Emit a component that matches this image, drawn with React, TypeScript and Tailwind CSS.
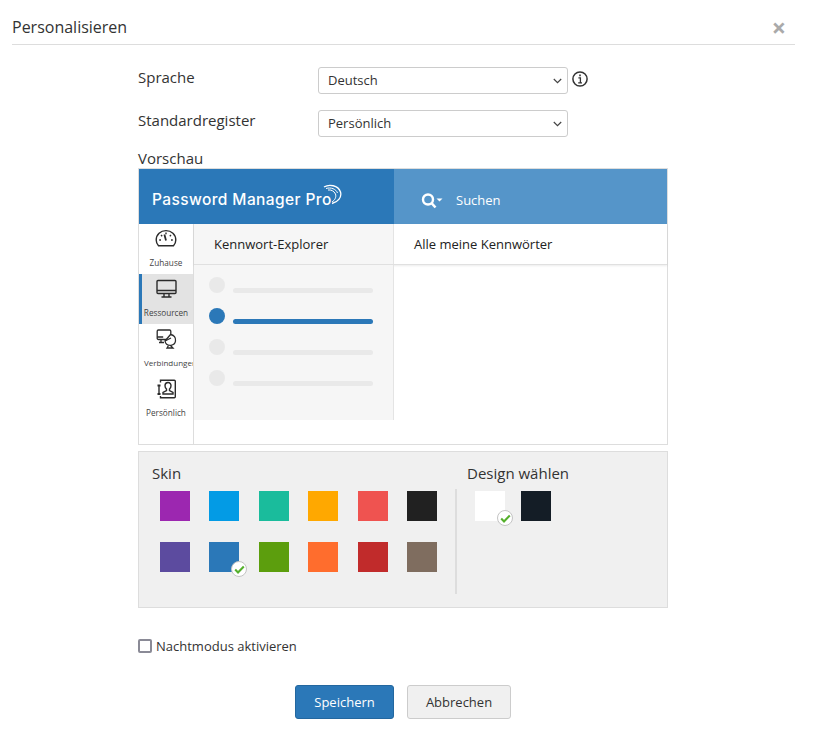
const row1 = ["#9c27b0", "#039be5", "#1abc9c", "#ffa800", "#ef5350", "#212121"];
const row2 = ["#5c4b9f", "#2b78b8", "#5c9e0d", "#ff6d2d", "#c12b2b", "#7f6d5f"];

function CheckBadge() {
  return (
    <span className="absolute right-[-8px] bottom-[-5px] flex h-[16px] w-[16px] items-center justify-center rounded-full border border-[#c4c4c4] bg-white">
      <svg width="11" height="9" viewBox="0 0 11 9" fill="none">
        <path d="M1.2 4.6 4 7.4 9.8 1.4" stroke="#55b02c" strokeWidth="2.1" />
      </svg>
    </span>
  );
}

function Swatch({ color, checked }: { color: string; checked?: boolean }) {
  return (
    <div className="relative h-[30px] w-[30px]" style={{ backgroundColor: color }}>
      {checked && <CheckBadge />}
    </div>
  );
}

function GaugeIcon() {
  return (
    <svg width="22" height="20" viewBox="0 0 22 20" fill="none" stroke="#2b2b2b" strokeWidth="1.4">
      <path d="M3.5 16.8C2 15.2 1.2 13.2 1.2 11 1.2 5.6 5.6 1.6 11 1.6S20.8 5.6 20.8 11c0 2.2-.8 4.2-2.3 5.8Z" />
      <path d="M11 11.5 9.4 5.6" strokeWidth="1.8" />
      <path d="M11 3.4v1.8M4.2 11H6M16 11h1.8M6 6l1.2 1.2M16 6l-1.2 1.2" />
    </svg>
  );
}

function MonitorIcon() {
  return (
    <svg width="21" height="20" viewBox="0 0 21 20" fill="none" stroke="#2b2b2b" strokeWidth="1.4">
      <rect x="1" y="1.5" width="19" height="13" rx="1" />
      <path d="M1 11.5h19M8 14.5v3M13 14.5v3M5.5 18h10" />
    </svg>
  );
}

function ConnectIcon() {
  return (
    <svg width="21" height="20" viewBox="0 0 21 20" fill="none" stroke="#2b2b2b" strokeWidth="1.3">
      <rect x="1.2" y="1" width="13.6" height="9.5" rx="1.2" />
      <path d="M1.2 8h6M5 10.5V13M3 13.5h5" />
      <path d="M14.5 5.5c3.5.5 5.500 3 5 6.500-.4 2.500-2 4-4.500 4.300-3 .3-5.500-1.500-6-4.300Z" fill="#fff" />
      <path d="M9 12 15 9M14.500 16.500 17 19H11l1.500-2.500" />
    </svg>
  );
}

function ContactIcon() {
  return (
    <svg width="21" height="20" viewBox="0 0 21 20" fill="none" stroke="#2b2b2b" strokeWidth="1.4">
      <path d="M4.500 3.500V1.200h13.800a1 1 0 0 1 1 1v15.600a1 1 0 0 1-1 1H4.500V17" />
      <path d="M1.500 6.500h3M1.500 15h3" strokeWidth="2" />
      <path d="M3 6.500V15" />
      <path d="M12 3.500c-2 0-3 1.400-3 3.200 0 1.500.6 2.600 1.500 3.300v1.500l-3.500 2v1.500h10v-1.500l-3.500-2V10c.9-.7 1.500-1.800 1.500-3.300 0-1.800-1-3.200-3-3.200Z" />
    </svg>
  );
}

function PreviewNavItem({
  label,
  active,
  clipped,
  children,
}: {
  label: string;
  active?: boolean;
  clipped?: boolean;
  children: React.ReactNode;
}) {
  return (
    <div
      className={
        active
          ? "flex h-[50px] flex-col items-center bg-[#e3e3e3] pt-[5px] shadow-[inset_3px_0_0_#2b78b8]"
          : "flex h-[50px] flex-col items-center pt-[5px]"
      }
    >
      <div className="flex h-[20px] items-center justify-center">{children}</div>
      <div
        className={
          clipped
            ? "mt-[7px] w-full overflow-hidden pl-[5px] text-left text-[8px] leading-[14px] whitespace-nowrap text-[#444]"
            : "mt-[7px] text-[8.2px] leading-[14px] whitespace-nowrap text-[#444]"
        }
      >
        {label}
      </div>
    </div>
  );
}

function PreviewRow({ active }: { active?: boolean }) {
  return (
    <div className="flex h-[31px] items-start">
      <div className={active ? "h-[16px] w-[16px] rounded-full bg-[#2b78b8]" : "h-[16px] w-[16px] rounded-full bg-[#e9e9e9]"} />
      <div
        className={
          active
            ? "mt-[11px] ml-[8px] h-[5px] w-[140px] rounded-full bg-[#2b78b8]"
            : "mt-[11px] ml-[8px] h-[5px] w-[140px] rounded-full bg-[#e9e9e9]"
        }
      />
    </div>
  );
}

function SelectBox({ value, options }: { value: string; options: string[] }) {
  return (
    <div className="relative h-[27px] w-[250px]">
      <select
        defaultValue={value}
        className="block h-[27px] w-full appearance-none rounded-[3px] border border-[#ccc] bg-white pl-[9px] text-[13px] text-[#333]"
      >
        {options.map((o) => (
          <option key={o}>{o}</option>
        ))}
      </select>
      <svg className="pointer-events-none absolute top-[11px] right-[6px]" width="9" height="6" viewBox="0 0 9 6" fill="none">
        <path d="M.8 1 4.5 4.7 8.2 1" stroke="#444" strokeWidth="1.2" />
      </svg>
    </div>
  );
}

export default function App() {
  return (
    <div className="h-[729px] w-[819px] overflow-hidden bg-white font-['Open_Sans',sans-serif] text-[#333]">
      {/* Title */}
      <div className="mr-[24px] ml-[12px] flex h-[45px] items-start justify-between border-b border-[#ddd] pt-[15px]">
        <h1 className="text-[16px] leading-[24px] text-[#333]">Personalisieren</h1>
        <span className="mr-[9px] text-[25px] leading-[24px] font-bold text-[#aaa]">×</span>
      </div>

      <div className="ml-[138px] w-[530px]">
        <div className="mt-[22px] flex h-[27px] items-start">
          <label className="w-[180px] text-[15px] leading-[20px]">Sprache</label>
          <SelectBox value="Deutsch" options={["Deutsch", "English"]} />
          <svg className="mt-[4px] ml-[4px]" width="16" height="16" viewBox="0 0 16 16" fill="none" stroke="#333">
            <circle cx="8" cy="8" r="7.1" strokeWidth="1.5" />
            <path d="M6.4 6.8H8.4V11.6M6.2 11.8H10" strokeWidth="1.3" />
            <path d="M8 3.6V5.2" strokeWidth="1.6" />
          </svg>
        </div>

        <div className="mt-[16px] flex h-[27px] items-start">
          <label className="w-[180px] text-[15px] leading-[20px]">Standardregister</label>
          <SelectBox value="Persönlich" options={["Persönlich", "Ressourcen"]} />
        </div>

        <div className="mt-[11px] text-[15px] leading-[20px]">Vorschau</div>

        {/* Preview */}
        <div className="h-[277px] border border-[#ddd]">
          <div className="flex h-[55px]">
            <div className="flex w-[255px] items-center bg-[#2b78b8] pt-[6px] pl-[13px]">
              <span className="font-['Inter',sans-serif] text-[15.5px] font-medium tracking-[0.4px] whitespace-nowrap text-white">
                Password Manager Pro
              </span>
              <svg className="mb-[9px] -ml-[11px]" width="22" height="22" viewBox="0 0 22 22" fill="none" stroke="#fff">
                <path d="M3 3C8 0 17 1 19.5 8 21 13 17 18 11 19.5" strokeWidth="1.3" />
                <path d="M5 4.5C10 3 15 5 16.5 9" strokeWidth="1" />
                <path d="M7 6C10 5.5 13 7 14.5 10 15.5 13 14 16 11 18" strokeWidth="1" />
              </svg>
            </div>
            <div className="flex flex-1 items-center bg-[#5595c9] pt-[8px] pl-[27px]">
              <svg width="23" height="16" viewBox="0 0 23 16" fill="none" stroke="#fff">
                <circle cx="7" cy="6.5" r="5" strokeWidth="2.4" />
                <path d="m10.5 10 4 4.5" strokeWidth="2.6" />
                <path d="M15.5 5.5h6l-3 3Z" fill="#fff" strokeWidth="0" />
              </svg>
              <span className="ml-[12px] text-[13px] text-white">Suchen</span>
            </div>
          </div>

          <div className="flex h-[220px]">
            <div className="w-[55px] shrink-0 overflow-hidden border-r border-[#ddd]">
              <PreviewNavItem label="Zuhause"><GaugeIcon /></PreviewNavItem>
              <PreviewNavItem label="Ressourcen" active><MonitorIcon /></PreviewNavItem>
              <PreviewNavItem label="Verbindungen" clipped><ConnectIcon /></PreviewNavItem>
              <PreviewNavItem label="Persönlich"><ContactIcon /></PreviewNavItem>
            </div>
            <div className="flex-1">
              <div className="flex h-[41px] border-b border-[#e0e0e0] shadow-[0_1px_2px_rgba(0,0,0,0.08)]">
                <div className="flex w-[200px] items-center border-r border-[#e4e4e4] bg-[#f6f6f6] pt-[2px] pl-[20px] text-[13px] text-[#222]">
                  Kennwort-Explorer
                </div>
                <div className="flex flex-1 items-center pt-[2px] pl-[20px] text-[13px] text-[#222]">Alle meine Kennwörter</div>
              </div>
              <div className="h-[155px] w-[200px] border-r border-[#e4e4e4] bg-[#f6f6f6] pt-[12px] pl-[15px]">
                <PreviewRow />
                <PreviewRow active />
                <PreviewRow />
                <PreviewRow />
              </div>
            </div>
          </div>
        </div>

        {/* Skin and design */}
        <div className="mt-[6px] flex h-[157px] border border-[#ddd] bg-[#f0f0f0]">
          <div className="w-[316px] pt-[11px] pl-[13px]">
            <div className="text-[15px] leading-[20px]">Skin</div>
            <div className="mt-[8px] ml-[8px] flex gap-[19.4px]">
              {row1.map((c) => (
                <Swatch key={c} color={c} />
              ))}
            </div>
            <div className="mt-[21px] ml-[8px] flex gap-[19.4px]">
              {row2.map((c, i) => (
                <Swatch key={c} color={c} checked={i === 1} />
              ))}
            </div>
          </div>
          <div className="mt-[37px] h-[105px] w-[2px] bg-[#ddd]" />
          <div className="pt-[11px] pl-[10px]">
            <div className="text-[15px] leading-[20px]">Design wählen</div>
            <div className="mt-[8px] ml-[8px] flex gap-[16px]">
              <Swatch color="#ffffff" checked />
              <Swatch color="#141d26" />
            </div>
          </div>
        </div>

        <label className="mt-[28px] flex h-[20px] items-center">
          <input type="checkbox" className="h-[14px] w-[14px] appearance-none rounded-[2px] border-2 border-[#8a8a96] bg-white" />
          <span className="ml-[4px] pt-[2px] text-[13px]">Nachtmodus aktivieren</span>
        </label>
      </div>

      <div className="mt-[29px] ml-[295px] flex gap-[13px]">
        <button className="h-[34px] w-[99px] rounded-[3px] border border-[#23679f] bg-[#2b78b8] pt-[2px] text-[13px] text-white">
          Speichern
        </button>
        <button className="h-[34px] w-[104px] rounded-[3px] border border-[#ccc] bg-[#f0f0f0] pt-[2px] text-[13px] text-[#333]">
          Abbrechen
        </button>
      </div>
    </div>
  );
}
